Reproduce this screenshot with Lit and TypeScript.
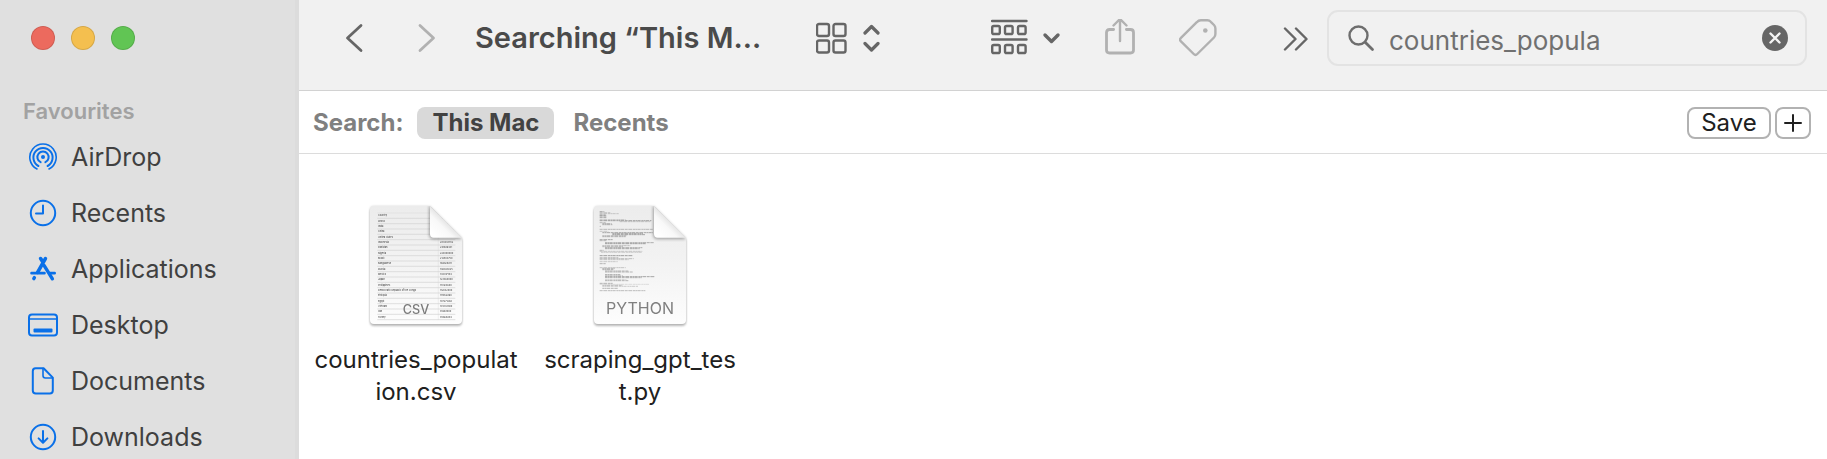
import { LitElement, html, css, svg } from "lit";
import { customElement, property, state } from "lit/decorators.js";
import { classMap } from "lit/directives/class-map.js";

type Place = { name: string; icon: unknown };

const places: Place[] = [
  {
    name: "AirDrop",
    icon: svg`
      <circle cx="15" cy="15" r="2" fill="currentColor" stroke="none" />
      <path d="M12.6 20.2A5.6 5.6 0 1 1 17.4 20.2" />
      <path d="M10.4 24A9.6 9.6 0 1 1 19.6 24" />
      <path d="M9 27A13.2 13.2 0 1 1 21 27" stroke-width="1.6" />`,
  },
  {
    name: "Recents",
    icon: svg`<circle cx="15" cy="15" r="12.2" /><path d="M15 7.5V15.5H8" />`,
  },
  {
    name: "Applications",
    icon: svg`
      <path d="M12.6 4.6L15 8.2M17.4 4.6L9.6 18.4" stroke-width="3.6" />
      <path d="M3.6 19.2H16.4M22.4 19.2H26.6" stroke-width="2.8" />
      <path d="M16.2 11.6L24.4 24.8" stroke-width="3.4" />
      <path d="M5.8 24.6L6.4 23.6" stroke-width="3.4" />`,
  },
  {
    name: "Desktop",
    icon: svg`
      <rect x="1" y="4.5" width="28" height="21" rx="3" />
      <path d="M1 9H29" stroke-width="1.6" />
      <rect x="5.5" y="18.5" width="19" height="4" rx="1" fill="currentColor" stroke="none" />`,
  },
  {
    name: "Documents",
    icon: svg`
      <path d="M7.6 2.2H15.6L24.8 11.6V24.6Q24.8 27.6 21.8 27.6H7.8Q4.8 27.6 4.8 24.6V5.2Q4.8 2.2 7.6 2.2Z" />
      <path d="M15 2.6V9.6Q15 12 17.4 12H24.4" stroke-width="1.6" />`,
  },
  {
    name: "Downloads",
    icon: svg`<circle cx="15" cy="15" r="12.2" /><path d="M15 9V20.4M10.6 16.4L15 20.8L19.4 16.4" />`,
  },
];

const csvRows: [string, string][] = [
  ["Country", ""],
  ["World", ""],
  ["India", ""],
  ["China", ""],
  ["United States", ""],
  ["Indonesia", "284438782"],
  ["Pakistan", "241499431"],
  ["Nigeria", "223800000"],
  ["Brazil", "212583750"],
  ["Bangladesh", "169828911"],
  ["Russia", "146028325"],
  ["Mexico", "130417144"],
  ["Japan", "123360000"],
  ["Philippines", "114123600"],
  ["Democratic Republic of the Congo", "112832000"],
  ["Ethiopia", "111652998"],
  ["Egypt", "107271260"],
  ["Vietnam", "101343800"],
  ["Iran", "85961000"],
  ["Turkey", "85664944"],
];

// Each entry is one line of the source preview: top, indent, length, darkness.
const codeLines: [number, number, number, number][] = [
  [16, 0, 14, 0.7], [19, 0, 32, 0.4], [22, 0, 58, 0.4], [26, 0, 18, 0.8], [29, 0, 20, 0.8],
  [34, 0, 20, 0.7], [40, 0, 78, 0.4], [43, 0, 155, 0.75], [46, 60, 92, 0.4], [49, 0, 18, 0.5],
  [52, 8, 28, 0.6], [55, 8, 30, 0.6], [60, 0, 4, 0.5], [69, 0, 160, 0.55], [75, 0, 26, 0.4],
  [79, 8, 152, 0.7], [82, 38, 92, 0.7], [85, 38, 98, 0.7], [88, 8, 72, 0.5], [91, 8, 70, 0.6],
  [100, 0, 40, 0.7], [103, 0, 20, 0.5], [109, 16, 146, 0.65], [112, 16, 122, 0.75],
  [118, 8, 84, 0.5], [121, 8, 62, 0.5], [124, 16, 112, 0.65], [127, 16, 104, 0.65],
  [132, 0, 12, 0.5], [135, 0, 128, 0.4], [138, 4, 122, 0.35], [148, 0, 100, 0.8],
  [154, 0, 56, 0.5], [157, 0, 102, 0.5], [160, 0, 88, 0.4], [166, 0, 54, 0.4], [172, 0, 18, 0.6],
  [184, 0, 78, 0.45], [187, 8, 38, 0.6], [190, 8, 34, 0.6], [194, 16, 70, 0.6], [197, 16, 84, 0.6],
  [205, 16, 46, 0.7], [208, 16, 54, 0.4], [211, 16, 148, 0.75], [214, 16, 110, 0.6],
  [220, 16, 64, 0.35], [223, 16, 70, 0.6], [231, 0, 40, 0.6], [234, 0, 150, 0.25], [237, 8, 60, 0.5],
  [240, 8, 108, 0.4], [246, 8, 46, 0.6], [253, 0, 138, 0.55],
];

@customElement("document-icon")
class DocumentIcon extends LitElement {
  @property() kind = "csv";

  static styles = css`
    :host {
      display: block;
      width: 92px;
      height: 118px;
    }
    .sheet {
      display: block;
      width: 100%;
      height: 100%;
      overflow: visible;
      filter: drop-shadow(0 2px 1px rgba(0, 0, 0, 0.24)) drop-shadow(0 0 1px rgba(0, 0, 0, 0.16));
    }
    .cell {
      font: 500 7px Inter, "Liberation Sans", sans-serif;
      fill: #4a4a4a;
    }
    .csv {
      font: 500 38px Inter, "Liberation Sans", sans-serif;
      fill: #7a7a7a;
    }
    .python {
      font: 400 48px Inter, "Liberation Sans", sans-serif;
      fill: #808080;
    }
  `;

  private table() {
    return svg`
      ${csvRows.map(([name, count], i) => {
        const y = 31 + i * 16;
        return svg`
          <path d="M22 ${y + 6}H256" stroke="#d2d2d2" stroke-width="2" />
          <text class="cell" x="24" y=${y}>${name}</text>
          <text class="cell" x="210" y=${y}>${count}</text>`;
      })}
      <path d="M22 21H256M205 21V342" stroke="#d2d2d2" stroke-width="1" fill="none" />
      <text class="csv" x="138" y="324" text-anchor="middle">CSV</text>`;
  }

  private source() {
    return svg`
      ${codeLines.map(
        ([y, indent, length, ink]) => svg`
          <path d="M${17 + indent} ${y + 1}h${length}" stroke="#555" stroke-width="2"
            stroke-dasharray="7 1 4 1 10 2" stroke-opacity=${ink} />`
      )}
      <text class="python" x="138" y="324" text-anchor="middle">PYTHON</text>`;
  }

  render() {
    return html`
      <svg class="sheet" viewBox="0 0 276 354" aria-hidden="true">
        <defs>
          <linearGradient id="paper" x1="0" y1="0" x2="0" y2="1">
            <stop offset="0" stop-color="#ececec" />
            <stop offset="0.5" stop-color="#f3f3f3" />
            <stop offset="1" stop-color="#fdfdfd" />
          </linearGradient>
          <linearGradient id="fold" x1="0.1" y1="0.9" x2="0.55" y2="0.45">
            <stop offset="0" stop-color="#ffffff" />
            <stop offset="0.6" stop-color="#f8f8f8" />
            <stop offset="1" stop-color="#dedede" />
          </linearGradient>
          <filter id="soft" x="-30%" y="-30%" width="160%" height="160%">
            <feGaussianBlur stdDeviation="5" />
          </filter>
          <clipPath id="outline">
            <path d="M12 0H180L276 95V342Q276 354 264 354H12Q0 354 0 342V12Q0 0 12 0Z" />
          </clipPath>
        </defs>
        <g clip-path="url(#outline)">
          <rect width="276" height="354" fill="url(#paper)" />
          ${this.kind === "csv" ? this.table() : this.source()}
          <path d="M177 0V84Q177 100 192 100H276L180 0Z" fill="#000" opacity="0.32" filter="url(#soft)" />
          <path d="M180 0V84Q180 95 191 95H276Z" fill="url(#fold)" />
        </g>
      </svg>
    `;
  }
}

@customElement("finder-sidebar")
class FinderSidebar extends LitElement {
  static styles = css`
    :host {
      display: block;
      box-sizing: border-box;
      padding: 26px 0 0 23px;
      background: #e0e0e0;
      border-right: 4px solid #dcdcdc;
      overflow: hidden;
    }
    .lights {
      display: flex;
      gap: 16px;
      padding-left: 8px;
    }
    .light {
      box-sizing: border-box;
      width: 24px;
      height: 24px;
      padding: 0;
      border: 1px solid rgba(0, 0, 0, 0.12);
      border-radius: 50%;
    }
    .close { background: #ec6a5e; }
    .minimise { background: #f4bf4f; }
    .zoom { background: #61c554; }
    .heading {
      margin: 45px 0 2px;
      font-size: 22px;
      line-height: 32px;
      font-weight: 600;
      color: #a2a2a2;
    }
    .list {
      margin: 0;
      padding: 0;
      list-style: none;
    }
    .place {
      display: flex;
      align-items: center;
      gap: 13px;
      height: 56px;
      padding-left: 5px;
      font-size: 25px;
      color: #404040;
      text-decoration: none;
    }
    .icon {
      flex: none;
      width: 30px;
      height: 30px;
      fill: none;
      stroke: currentColor;
      stroke-width: 2;
      stroke-linecap: round;
      stroke-linejoin: round;
      color: #0a70e8;
    }
  `;

  render() {
    return html`
      <div class="lights">
        <button class="light close" aria-label="Close"></button>
        <button class="light minimise" aria-label="Minimise"></button>
        <button class="light zoom" aria-label="Zoom"></button>
      </div>
      <h2 class="heading">Favourites</h2>
      <ul class="list">
        ${places.map(
          (p) => html`<li>
            <a class="place" href="#">
              <svg class="icon" viewBox="0 0 30 30" aria-hidden="true">${p.icon}</svg>${p.name}
            </a>
          </li>`
        )}
      </ul>
    `;
  }
}

@customElement("finder-toolbar")
class FinderToolbar extends LitElement {
  @property() query = "";

  static styles = css`
    :host {
      display: flex;
      align-items: center;
      padding: 10px 20px 24px 35px;
      background: #f1f1f1;
      border-bottom: 1px solid #d2d2d2;
    }
    .tool {
      display: flex;
      flex: none;
      align-items: center;
      justify-content: center;
      padding: 0;
      border: 0;
      background: none;
      color: #666;
    }
    .nav { width: 40px; }
    .forward { margin: 0 28px 0 33px; }
    .dim { color: #b1b1b1; }
    .view { margin-right: 111px; }
    .group, .share { margin-right: 44px; }
    .tag { margin-right: 66px; }
    .more { margin-right: 18px; }
    .glyph {
      display: block;
      fill: none;
      stroke: currentColor;
      stroke-width: 2.4;
      stroke-linecap: round;
      stroke-linejoin: round;
    }
    .title {
      flex: none;
      width: 341px;
      margin: 0;
      font-size: 29px;
      line-height: 40px;
      font-weight: 600;
      color: #4a4a4a;
      white-space: nowrap;
    }
    .search {
      display: flex;
      flex: 1;
      align-items: center;
      gap: 14px;
      box-sizing: border-box;
      height: 56px;
      min-width: 0;
      padding: 0 17px 0 19px;
      border: 2px solid #e3e3e3;
      border-radius: 11px;
      color: #6e6e6e;
    }
    .field {
      flex: 1;
      min-width: 0;
      padding: 5px 0 0;
      border: 0;
      outline: 0;
      background: none;
      font: inherit;
      font-size: 26px;
      line-height: 32px;
      color: #707070;
    }
  `;

  render() {
    return html`
      <button class="tool nav" aria-label="Back">
        <svg class="glyph" width="20" height="30" viewBox="0 0 20 30"><path d="M17 2.5L3.5 15L17 27.5" stroke-width="2.8" /></svg>
      </button>
      <button class="tool nav forward dim" aria-label="Forward">
        <svg class="glyph" width="20" height="30" viewBox="0 0 20 30"><path d="M3 2.5L16.5 15L3 27.5" stroke-width="2.8" /></svg>
      </button>
      <h1 class="title">Searching “This M…</h1>
      <button class="tool view" aria-label="View as icons">
        <svg class="glyph" width="64" height="36" viewBox="0 0 64 36">
          <rect x="1" y="4" width="12" height="12" rx="2" /><rect x="17.5" y="4" width="12" height="12" rx="2" />
          <rect x="1" y="20.5" width="12" height="12" rx="2" /><rect x="17.5" y="20.5" width="12" height="12" rx="2" />
          <path d="M49 13L55.5 6.5L62 13M49 23.5L55.5 30L62 23.5" stroke-width="3.2" />
        </svg>
      </button>
      <button class="tool group" aria-label="Group items">
        <svg class="glyph" width="70" height="38" viewBox="0 0 70 38">
          <path d="M1 2H35.5M1 20.5H35.5" />
          <rect x="1.2" y="7" width="7.6" height="8" rx="1.6" /><rect x="14" y="7" width="7.6" height="8" rx="1.6" /><rect x="27" y="7" width="7.6" height="8" rx="1.6" />
          <rect x="1.2" y="26" width="7.6" height="8" rx="1.6" /><rect x="14" y="26" width="7.6" height="8" rx="1.6" /><rect x="27" y="26" width="7.6" height="8" rx="1.6" />
          <path d="M54 16L60.5 22.5L67 16" stroke-width="3.4" />
        </svg>
      </button>
      <button class="tool share dim" aria-label="Share">
        <svg class="glyph" width="30" height="38" viewBox="0 0 30 38">
          <path d="M8.6 10.5H4.5Q1.5 10.5 1.5 13.5V31Q1.5 34 4.5 34H25.5Q28.5 34 28.5 31V13.5Q28.5 10.5 25.5 10.5H21.4" stroke-width="2.8" />
          <path d="M15 22V1M8.5 6.5L15 0L21.5 6.5" />
        </svg>
      </button>
      <button class="tool tag dim" aria-label="Tags">
        <svg class="glyph" width="38" height="40" viewBox="0 0 38 40">
          <path d="M1.7 20.2L17.8 4.2Q19.5 2.3 21.8 2.3H28.4Q30.4 2.3 31.8 3.8L35 7Q36.4 8.4 36.4 10.4V16Q36.4 18 35 19.5L18.3 36Q16.5 37.8 14.7 36L1.7 23.2Q0.3 21.7 1.7 20.2Z" />
          <circle cx="26.3" cy="12.5" r="2.3" fill="currentColor" stroke="none" />
        </svg>
      </button>
      <button class="tool more" aria-label="More toolbar items">
        <svg class="glyph" width="26" height="26" viewBox="0 0 26 26"><path d="M2 3.5L12.5 14L2 24.5M13 3.5L23.5 14L13 24.5" /></svg>
      </button>
      <label class="search">
        <svg class="glyph" width="27" height="28" viewBox="0 0 27 28" aria-hidden="true">
          <circle cx="10.5" cy="11.5" r="9" /><path d="M17.2 18.2L24.5 25.5" stroke-width="2.8" />
        </svg>
        <input class="field" type="text" aria-label="Search" .value=${this.query} />
        <button class="tool" aria-label="Clear search">
          <svg class="glyph" width="26" height="26" viewBox="0 0 26 26">
            <circle cx="13" cy="13" r="13" fill="#666" stroke="none" />
            <path d="M8.5 8.5L17.5 17.5M17.5 8.5L8.5 17.5" stroke="#f4f4f4" />
          </svg>
        </button>
      </label>
    `;
  }
}

@customElement("search-scope")
class SearchScope extends LitElement {
  @state() private scope = "This Mac";

  static styles = css`
    :host {
      display: flex;
      align-items: center;
      height: 60px;
      padding: 2px 16px 0 14px;
      border-bottom: 1px solid #dcdcdc;
    }
    .label {
      margin-right: 14px;
      font-size: 24px;
      line-height: 32px;
      font-weight: 700;
      color: #808080;
    }
    .scope {
      height: 32px;
      margin-right: 4px;
      padding: 0 15px;
      border: 0;
      border-radius: 8px;
      background: none;
      font: inherit;
      font-size: 24px;
      line-height: 32px;
      font-weight: 700;
      color: #808080;
    }
    .selected {
      background: #d9d9d9;
      color: #424242;
    }
    .spacer { flex: 1; }
    .action {
      display: flex;
      align-items: center;
      justify-content: center;
      box-sizing: border-box;
      height: 32px;
      margin-left: 4px;
      padding: 0;
      border: 2px solid #b2b2b2;
      border-radius: 8px;
      background: #fff;
      font: inherit;
      font-size: 24px;
      line-height: 28px;
      color: #202020;
    }
    .save { width: 84px; }
    .add { width: 36px; }
  `;

  render() {
    return html`
      <span class="label">Search:</span>
      ${["This Mac", "Recents"].map(
        (name) => html`<button
          class=${classMap({ scope: true, selected: name === this.scope })}
          @click=${() => (this.scope = name)}
        >${name}</button>`
      )}
      <span class="spacer"></span>
      <button class="action save">Save</button>
      <button class="action add" aria-label="Add criteria">
        <svg width="18" height="18" viewBox="0 0 18 18" fill="none" stroke="currentColor" stroke-width="2" stroke-linecap="round">
          <path d="M9 1V17M1 9H17" />
        </svg>
      </button>
    `;
  }
}

@customElement("app-root")
class AppRoot extends LitElement {
  static styles = css`
    :host {
      display: grid;
      grid-template-columns: 299px minmax(0, 1fr);
      height: 100vh;
      overflow: hidden;
      background: #fff;
      font-family: Inter, "Liberation Sans", sans-serif;
    }
    .files {
      display: flex;
      flex-wrap: wrap;
      margin: 0;
      padding: 52px 5px 0;
      list-style: none;
    }
    .file {
      display: flex;
      flex-direction: column;
      align-items: center;
      gap: 20px;
      width: 224px;
    }
    .name {
      max-width: 212px;
      font-size: 24px;
      line-height: 32px;
      text-align: center;
      color: #202020;
    }
  `;

  render() {
    return html`
      <finder-sidebar></finder-sidebar>
      <main>
        <finder-toolbar query="countries_popula"></finder-toolbar>
        <search-scope></search-scope>
        <ul class="files">
          <li class="file">
            <document-icon kind="csv"></document-icon>
            <span class="name">countries_populat<wbr />ion.csv</span>
          </li>
          <li class="file">
            <document-icon kind="python"></document-icon>
            <span class="name">scraping_gpt_tes<wbr />t.py</span>
          </li>
        </ul>
      </main>
    `;
  }
}
